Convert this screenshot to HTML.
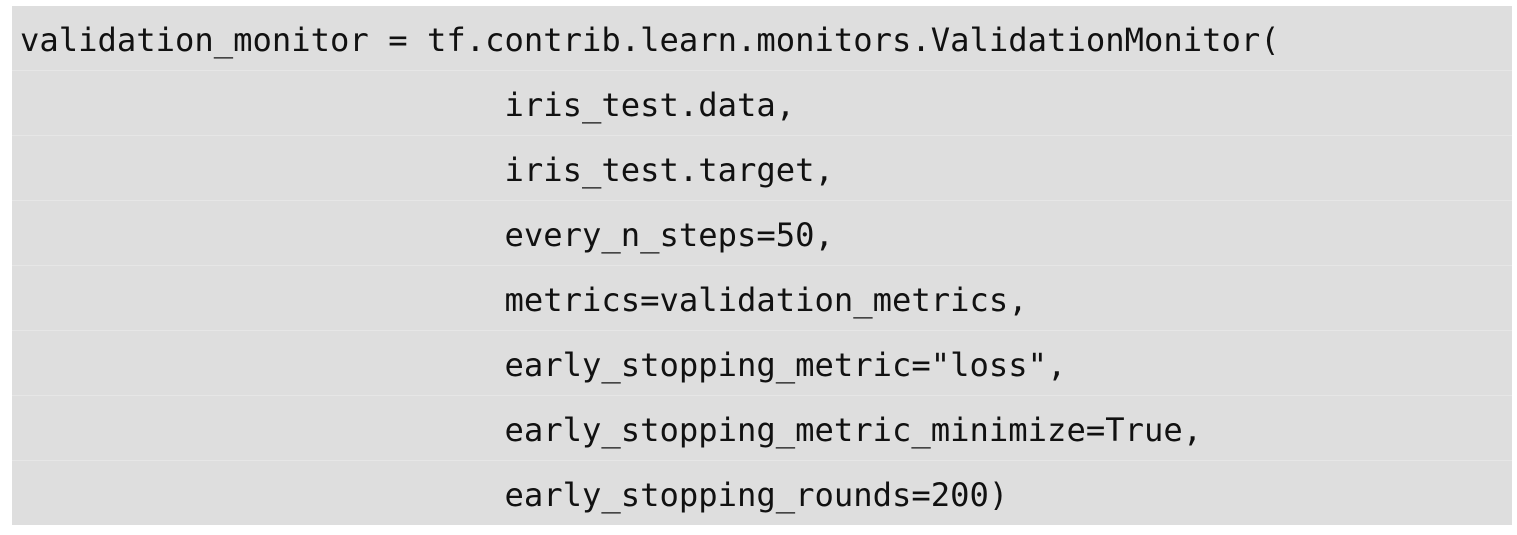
<!DOCTYPE html>
<html><head><style>
body{margin:0;background:#fff;width:1517px;height:535px;overflow:hidden}
.box{position:absolute;left:12px;top:6px;width:1500px;background:#dedede}
.r{height:64px;border-bottom:1px solid #e6e6e6;font:32.2px/68px "DejaVu Sans Mono","Liberation Mono",monospace;color:#111;white-space:pre;padding-left:8px;box-sizing:content-box}
.r:last-child{border-bottom:none}
</style></head><body>
<div class="box">
<div class="r">validation_monitor = tf.contrib.learn.monitors.ValidationMonitor(</div>
<div class="r">                         iris_test.data,</div>
<div class="r">                         iris_test.target,</div>
<div class="r">                         every_n_steps=50,</div>
<div class="r">                         metrics=validation_metrics,</div>
<div class="r">                         early_stopping_metric="loss",</div>
<div class="r">                         early_stopping_metric_minimize=True,</div>
<div class="r">                         early_stopping_rounds=200)</div>
</div>
</body></html>
